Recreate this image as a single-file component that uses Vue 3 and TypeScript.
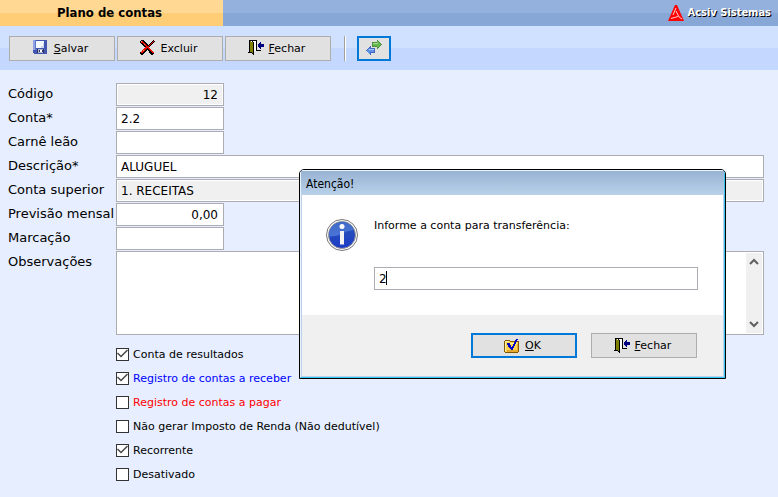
<script setup lang="ts">
import { ref } from 'vue'

interface Shape { fill: string; d: string }
interface Option { id: string; label: string; tone: string; checked: boolean }

const door: Shape[] = [
  { fill: '#000', d: 'M1 0h8v1H1zM1 0h1v13H1zM8 0h1v11H8zM5 2h1v13H5zM2 12h2v1H2zM4 13h1v1H4zM8 10h5v1H8zM0 12h1v1H0z' },
  { fill: '#fff', d: 'M3 1h5v10H6V2H3z' },
  { fill: '#808000', d: 'M2 1h1v1h2v11H4v-1H2z' },
  { fill: '#000', d: 'M4 1h1v1H4zM5 2h1v13H5z' },
  { fill: '#000080', d: 'M12 2h1v2h3v3h-3v2h-1V8h-1V7h-1V4h1V3h1z' },
]
const floppy: Shape[] = [
  { fill: '#4357b0', d: 'M0 0h14v14H1v-1H0z' },
  { fill: '#8fa2e6', d: 'M0 0h2v10H0z' },
  { fill: '#5f75c8', d: 'M2 0h1v9H2zM2 9h10v1H2z' },
  { fill: '#f6f8ff', d: 'M3 1h8v7H3z' },
  { fill: '#cdd7f0', d: 'M8 6h3v2H8zM10 3h1v5h-1z' },
  { fill: '#2c3566', d: 'M4 9h7v4H4z' },
  { fill: '#aeb5cf', d: 'M5 9h5v1H5zM5 10h1v3H5zM6 12h4v1H6z' },
  { fill: '#fff', d: 'M7 10h2v2H7z' },
]
const cross: Shape[] = [
  { fill: '#000', d: 'M1 0h3v1h1v1h1v1h1v1h1v1h1V4h1V3h1V2h1V1h1V0h1v1h1v1h-1v1h-1v1h-1v1h-1v1h-1v1h-1v1h1v1h1v1h1v1h1v1h1v2h-1v1h-2v-1h-1v-1h-1v-1H9v-1H8v-1H7v1H6v1H5v1H4v1H3v1H1v-1H0v-2h1v-1h1v-1h1v-1h1V8h1V7H4V6H3V5H2V4H1V3H0V1h1z' },
  { fill: '#e80c00', d: 'M1 1h2v1h1v1h1v1h1v1h1v1h2V5h1V4h1V3h1V2h1V1h1v1h-1v1h-1v1h-1v1h-1v1H9v2h1v1h1v1h1v1h1v1h1v1h-2v-1h-1v-1h-1v-1H9V9H8V8H7v1H6v1H5v1H4v1H3v1H1v-2h1v-1h1V9h1V8h1V7h1V6H5V5H4V4H3V3H1z' },
  { fill: '#ff8a70', d: 'M1 1h1v1H1zM4 4h1v1H4zM1 11h1v1H1zM3 10h1v1H3z' },
]
const swap: Shape[] = [
  { fill: '#4c8f3c', d: 'M11 0h1v1h1v1h1v1h1v1h1v1h-1v1h-1v1h-1v1h-1v1h-1V7H6V2h5z' },
  { fill: '#67b74f', d: 'M11 1h1v1h1v1h1v1h1v1h-1v1h-1v1h-2V6H7V3h4z' },
  { fill: '#a5db8e', d: 'M7 3h5v1H7z' },
  { fill: '#4468bd', d: 'M5 6v2h4v5H5v2H4v-1H3v-1H2v-1H1v-1H0v-1h1V9h1V8h1V7h1V6z' },
  { fill: '#5f91e8', d: 'M4 7v2h4v3H4v2H3v-1H2v-1H1v-2h1V9h1V8h1z' },
  { fill: '#a9c9ff', d: 'M3 9h5v1H3z' },
]
const folder: Shape[] = [
  { fill: '#805a00', d: 'M1 2h5v1h9v11h-1v1H1v-1H0V3h1z' },
  { fill: '#ffd34d', d: 'M1 3h5v1h8v10H1z' },
  { fill: '#fff2a0', d: 'M1 3h4v1H1zM1 4h1v9H1zM3 5h10v1H3z' },
  { fill: '#e9a92e', d: 'M3 12h11v2H3zM13 6h1v7h-1z' },
  { fill: '#0000c8', d: 'M12 1h2v1h-1v2h-1v2h-1v2h-1v2H9v2H7v-1H6v-1H5V9H4V7H3V5h3v2h1v2h1V8h1V6h1V4h1V2h1z' },
]

const toolbar = [
  { key: 'S', rest: 'alvar', icon: floppy },
  { key: '', rest: 'Excluir', icon: cross },
  { key: 'F', rest: 'echar', icon: door },
]
const dialogButtons = [
  { key: 'O', rest: 'K', icon: folder, primary: true },
  { key: 'F', rest: 'echar', icon: door, primary: false },
]
const fields = ref([
  { id: 'codigo', label: 'Código', value: '12', wide: false, right: true, readonly: true },
  { id: 'conta', label: 'Conta*', value: '2.2', wide: false, right: false, readonly: false },
  { id: 'carne', label: 'Carnê leão', value: '', wide: false, right: false, readonly: false },
  { id: 'descricao', label: 'Descrição*', value: 'ALUGUEL', wide: true, right: false, readonly: false },
  { id: 'superior', label: 'Conta superior', value: '1. RECEITAS', wide: true, right: false, readonly: true },
  { id: 'previsao', label: 'Previsão mensal', value: '0,00', wide: false, right: true, readonly: false },
  { id: 'marcacao', label: 'Marcação', value: '', wide: false, right: false, readonly: false },
])
const options = ref<Option[]>([
  { id: 'resultados', label: 'Conta de resultados', tone: '', checked: true },
  { id: 'receber', label: 'Registro de contas a receber', tone: 'blue', checked: true },
  { id: 'pagar', label: 'Registro de contas a pagar', tone: 'red', checked: false },
  { id: 'ir', label: 'Não gerar Imposto de Renda (Não dedutível)', tone: '', checked: false },
  { id: 'recorrente', label: 'Recorrente', tone: '', checked: true },
  { id: 'desativado', label: 'Desativado', tone: '', checked: false },
])
const notes = ref('')
const target = ref('2')
</script>

<template>
  <div class="app">
    <header class="header">
      <h1 class="tab">Plano de contas</h1>
      <div class="brand">
        <svg class="logo" viewBox="0 0 16 16" aria-hidden="true">
          <path fill="#f00" d="M7 0h2l7 16H0z" />
          <path fill="none" stroke="#fff" stroke-width=".8" d="M8 3L5 10M3 13.500L10 11.500M8 6l3 6 3 2" />
        </svg>
        <span>Acsiv Sistemas</span>
      </div>
    </header>

    <nav class="toolbar">
      <button v-for="b in toolbar" :key="b.rest" type="button" class="btn">
        <svg class="icon" viewBox="0 0 16 16" aria-hidden="true">
          <path v-for="(s, i) in b.icon" :key="i" :fill="s.fill" :d="s.d" />
        </svg>
        <span><u v-if="b.key">{{ b.key }}</u>{{ b.rest }}</span>
      </button>
      <div class="divider"></div>
      <button type="button" class="btn square primary" aria-label="Transferir">
        <svg class="icon" viewBox="0 0 16 16" aria-hidden="true">
          <path v-for="(s, i) in swap" :key="i" :fill="s.fill" :d="s.d" />
        </svg>
      </button>
    </nav>

    <form class="form" @submit.prevent>
      <div v-for="f in fields" :key="f.id" class="row">
        <label :for="f.id">{{ f.label }}</label>
        <input :id="f.id" v-model="f.value" type="text" class="field"
          :class="{ wide: f.wide, right: f.right, locked: f.readonly }" :readonly="f.readonly">
      </div>
      <div class="row notes-row">
        <label for="notes">Observações</label>
        <div class="notes">
          <textarea id="notes" v-model="notes"></textarea>
          <div class="scroll">
            <svg viewBox="0 0 16 16" aria-hidden="true"><path d="M4 11l4-4 4 4" /></svg>
            <svg viewBox="0 0 16 16" aria-hidden="true"><path d="M4 5l4 4 4-4" /></svg>
          </div>
        </div>
      </div>
      <div class="options">
        <label v-for="o in options" :key="o.id" class="option" :class="o.tone">
          <input v-model="o.checked" type="checkbox">{{ o.label }}
        </label>
      </div>
    </form>

    <section class="dialog" role="dialog" aria-labelledby="dialog-title">
      <div class="frame">
        <h2 id="dialog-title" class="title">Atenção!</h2>
        <div class="content">
          <svg class="info" viewBox="0 0 32 32" aria-hidden="true">
            <defs>
              <linearGradient id="ball" x1="0" y1="0" x2="0" y2="1">
                <stop offset="0" stop-color="#2c56b4" />
                <stop offset="1" stop-color="#1c3cc8" />
              </linearGradient>
              <linearGradient id="shine" x1="0" y1="0" x2="0" y2="1">
                <stop offset="0" stop-color="#3f6cc6" />
                <stop offset="1" stop-color="#4a73d8" />
              </linearGradient>
            </defs>
            <circle cx="16" cy="16" r="15.500" fill="#fff" stroke="#777" />
            <circle cx="16" cy="16" r="13.500" fill="url(#ball)" stroke="#999" />
            <path fill="url(#shine)" d="M3 17A13 13 0 0 1 28 11Q20 12 15 15T3 17z" />
            <circle cx="16" cy="7.500" r="2.500" fill="#fff" />
            <path fill="#f4f4f4" d="M14 12h4v13.500h-4z" />
          </svg>
          <div class="prompt">
            <label for="target">Informe a conta para transferência:</label>
            <div class="entry">
              <input id="target" v-model="target" type="text" class="field">
              <span class="caret"></span>
            </div>
          </div>
        </div>
        <div class="actions">
          <button v-for="b in dialogButtons" :key="b.rest" type="button" class="btn" :class="{ primary: b.primary }">
            <svg class="icon" viewBox="0 0 16 16" aria-hidden="true">
              <path v-for="(s, i) in b.icon" :key="i" :fill="s.fill" :d="s.d" />
            </svg>
            <span><u>{{ b.key }}</u>{{ b.rest }}</span>
          </button>
        </div>
      </div>
    </section>
  </div>
</template>

<style>
body {
  background: #e6eeff;
}
</style>

<style scoped>
.app {
  position: relative;
  font-family: "DejaVu Sans", Verdana, sans-serif;
  font-size: 11px;
  color: #000;
}
.app * {
  box-sizing: border-box;
}
.header {
  display: flex;
  justify-content: space-between;
  height: 26px;
  background: linear-gradient(#93b1dc 50%, #87a7d7 50%);
}
.tab {
  width: 223px;
  margin: 0;
  padding-right: 4px;
  background: linear-gradient(#ffd994 50%, #ffcd75 50%);
  font: bold 13px/26px "DejaVu Sans Condensed", Tahoma, sans-serif;
  text-align: center;
}
.brand {
  display: flex;
  align-items: center;
  gap: 4px;
  padding-right: 7px;
  color: #fff;
  font: bold 11px/26px "DejaVu Sans Condensed", Tahoma, sans-serif;
  text-shadow: 1px 1px 0 #000;
}
.logo {
  width: 16px;
  height: 16px;
}
.toolbar {
  display: flex;
  align-items: center;
  gap: 2px;
  height: 44px;
  padding: 0 9px;
  background: linear-gradient(#d0e0ff 50%, #c4d8ff 50%);
}
.btn {
  display: flex;
  align-items: center;
  justify-content: center;
  gap: 5px;
  width: 106px;
  height: 25px;
  padding: 0 3px 0 0;
  border: 1px solid #adadad;
  background: #e1e1e1;
  color: #000;
  font: inherit;
}
.primary {
  border: 2px solid #0078d7;
}
.square {
  width: 34px;
  padding: 0;
}
.icon {
  width: 16px;
  height: 16px;
  shape-rendering: crispEdges;
}
.divider {
  width: 2px;
  height: 25px;
  margin: 0 9px 0 11px;
  border-left: 1px solid #a0a0a0;
  background: #fff;
}
.form {
  padding: 13px 14px 16px 8px;
}
.row {
  display: flex;
  height: 24px;
}
.row > label {
  flex: none;
  width: 108px;
  font-size: 13px;
  line-height: 21px;
  white-space: nowrap;
}
.field {
  width: 108px;
  height: 23px;
  padding: 1px 4px 0;
  border: 1px solid #abadb3;
  outline: 0;
  background: #fff;
  color: #000;
  font: 12px "DejaVu Sans", Verdana, sans-serif;
}
.wide {
  flex: 1;
}
.right {
  padding-right: 5px;
  text-align: right;
}
.locked {
  background: #f0f0f0;
  box-shadow: inset 0 0 0 1px #fff;
}
.notes-row {
  height: 84px;
}
.notes {
  display: flex;
  flex: 1;
  padding: 1px;
  border: 1px solid #abadb3;
  background: #fff;
}
.notes textarea {
  flex: 1;
  min-width: 0;
  padding: 3px;
  border: 0;
  outline: 0;
  resize: none;
  font: 12px "DejaVu Sans", Verdana, sans-serif;
}
.scroll {
  display: flex;
  flex-direction: column;
  justify-content: space-between;
  width: 16px;
  background: #f0f0f0;
}
.scroll svg {
  width: 16px;
  height: 16px;
  fill: none;
  stroke: #606060;
  stroke-width: 2;
}
.options {
  padding: 7px 0 0 108px;
}
.option {
  display: flex;
  align-items: center;
  gap: 4px;
  height: 24px;
}
.option input {
  appearance: none;
  width: 13px;
  height: 13px;
  margin: 0;
  border: 1px solid #333;
  background: #fff;
}
.option input:checked::before {
  content: "";
  display: block;
  width: 11px;
  height: 11px;
  background: #444;
  clip-path: polygon(0 5px, 1px 4px, 4px 7px, 10px 1px, 11px 2px, 4px 9px);
}
.blue {
  color: #00f;
}
.red {
  color: #f00;
}
.dialog {
  position: absolute;
  top: 169px;
  left: 299px;
  width: 427px;
  overflow: hidden;
  border: 1px solid #000;
  border-radius: 5px 5px 0 0;
  background: #e8f2fc;
}
.frame {
  border: 1px solid #e8f2fc;
  border-right-color: #36c5f0;
  border-bottom-color: #36c5f0;
}
.title {
  height: 24px;
  margin: 0;
  padding-left: 5px;
  background: linear-gradient(#98b3d2, #b9d1ea);
  font: 12px/26px "DejaVu Sans Condensed", Tahoma, sans-serif;
}
.content {
  display: flex;
  gap: 16px;
  height: 120px;
  padding: 24px 25px 0 24px;
  border: solid #b9d1ea;
  border-width: 0 1px;
  background: #fff;
}
.info {
  flex: none;
  width: 32px;
  height: 32px;
}
.prompt {
  display: flex;
  flex: 1;
  flex-direction: column;
  gap: 34px;
}
.prompt label {
  line-height: 14px;
}
.entry {
  position: relative;
  display: flex;
}
.entry .field {
  flex: 1;
}
.caret {
  position: absolute;
  top: 4px;
  left: 12px;
  width: 1px;
  height: 14px;
  background: #000;
}
.actions {
  display: flex;
  justify-content: flex-end;
  gap: 14px;
  padding: 18px 26px 18px 0;
  border: 1px solid #b9d1ea;
  border-top: 0;
  background: #f0f0f0;
}
</style>
